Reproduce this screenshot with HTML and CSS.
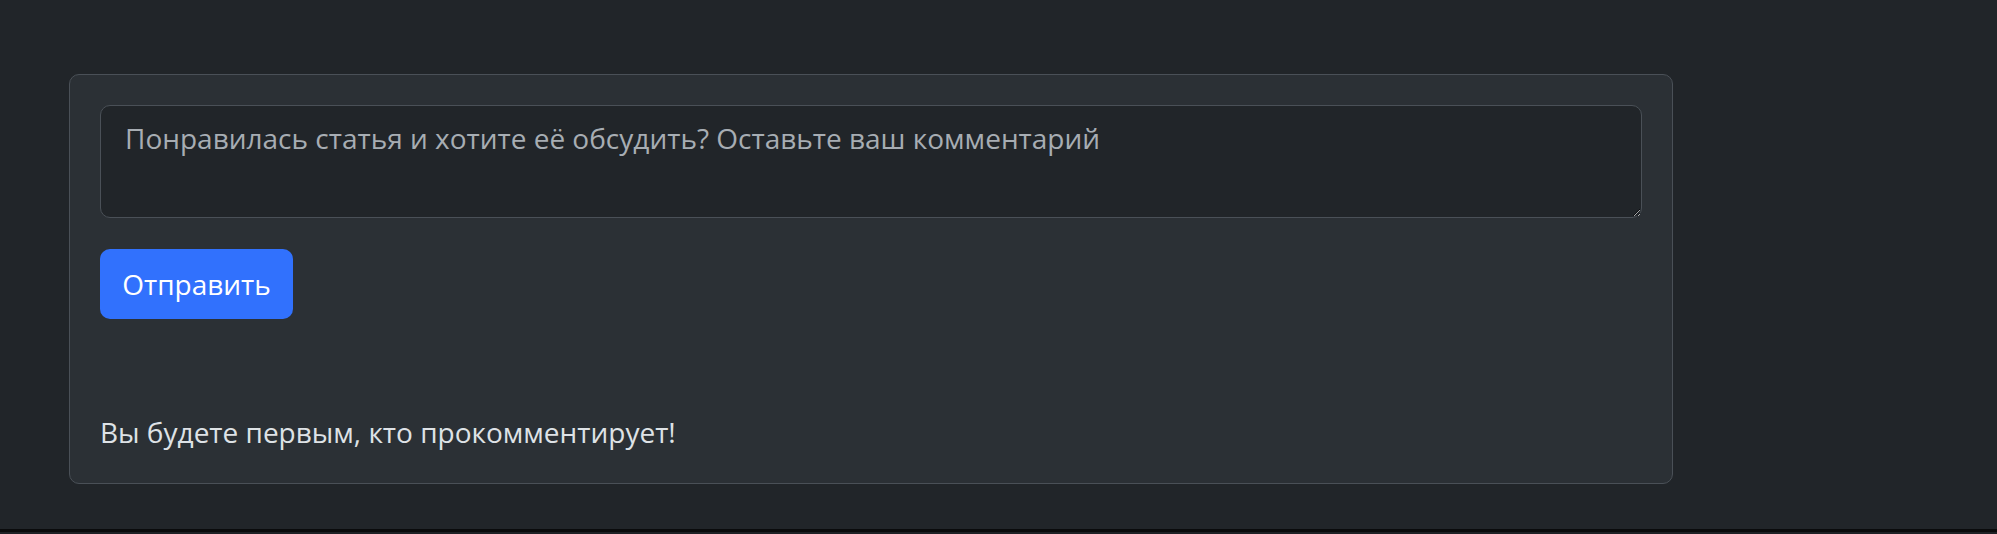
FILE: index.html
```html
<!DOCTYPE html>
<html lang="ru">
<head>
<meta charset="utf-8">
<link rel="stylesheet" href="styles.css">
</head>
<body>
<div class="page">
  <div class="card">
    <form class="comment-form">
      <textarea class="comment-input" placeholder="Понравилась статья и хотите её обсудить? Оставьте ваш комментарий"></textarea>
      <button type="button" class="btn-send">Отправить</button>
    </form>
    <p class="empty-note">Вы будете первым, кто прокомментирует!</p>
  </div>
</div>
<div class="footer-edge"></div>
</body>
</html>
```
FILE: styles.css
```css
html, body {
  margin: 0;
  padding: 0;
  background: #212529;
}
body {
  font-family: "Open Sans", "Noto Sans", sans-serif;
  color: #dee2e6;
  overflow: hidden;
}
.page {
  height: 529px;
  box-sizing: border-box;
  padding: 74px 0 0 69px;
}
.card {
  width: 1604px;
  height: 410px;
  box-sizing: border-box;
  background: #2b3035;
  border: 1px solid #4a5057;
  border-radius: 10px;
  padding: 30px;
  display: flex;
  flex-direction: column;
}
.comment-form {
  display: flex;
  flex-direction: column;
  align-items: flex-start;
  gap: 31px;
}
.comment-input {
  width: 1542px;
  height: 113px;
  box-sizing: border-box;
  background: #212529;
  border: 1px solid #4a5057;
  border-radius: 10px;
  padding: 11px 24px;
  font-family: inherit;
  font-size: 28px;
  line-height: 42px;
  color: #dee2e6;
  resize: vertical;
  outline: none;
}
.comment-input::placeholder {
  color: #a7adb3;
  opacity: 1;
}
.btn-send {
  width: 193px;
  height: 70px;
  background: #3171fd;
  border: none;
  border-radius: 10px;
  color: #ffffff;
  font-family: inherit;
  font-size: 28px;
  padding: 0;
}
.empty-note {
  margin: auto 0 0 0;
  font-size: 28px;
  line-height: 42px;
}
.footer-edge {
  height: 3px;
  background: #0a0b0c;
  border-bottom: 2px solid #1e2125;
}
```
